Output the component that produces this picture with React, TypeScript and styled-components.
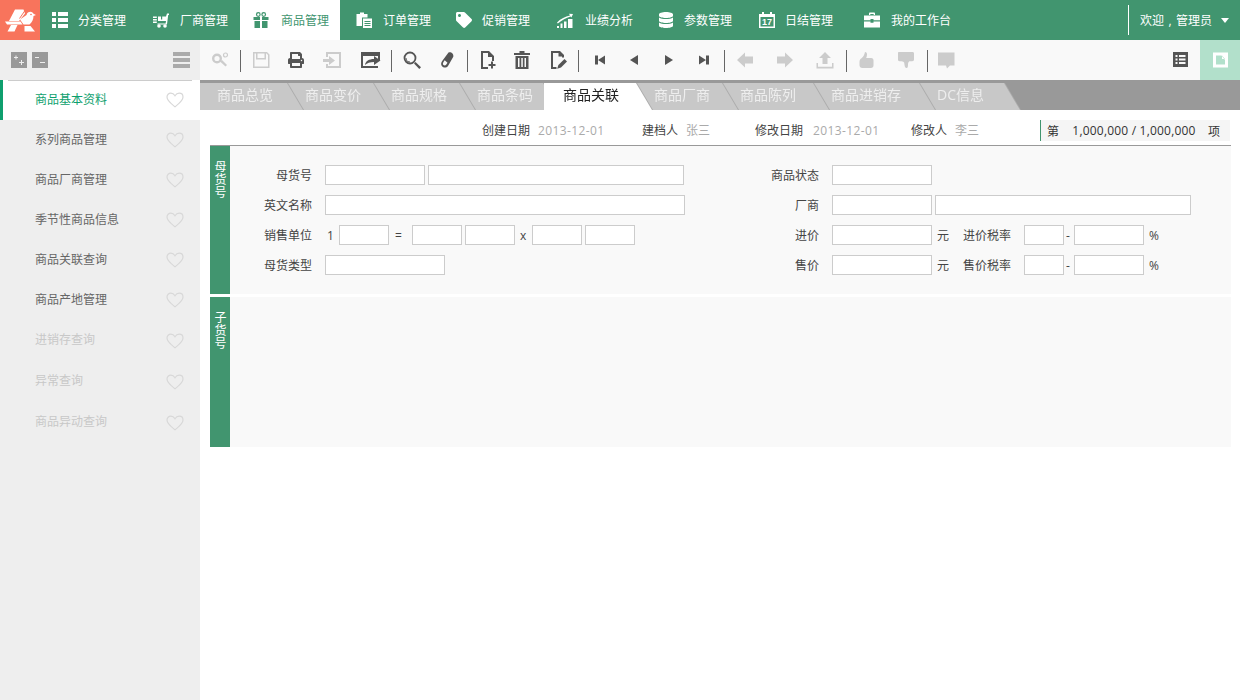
import React from "react";
import styled, { createGlobalStyle } from "styled-components";
import { FaTag, FaDatabase, FaPrint } from "react-icons/fa";

const GlobalStyle = createGlobalStyle`
  html, body {
    margin: 0;
    padding: 0;
    background: #fff;
  }
  * {
    box-sizing: border-box;
  }
  body {
    font-family: "Open Sans", "Noto Sans CJK SC", sans-serif;
    font-size: 12px;
    color: #555;
  }
`;

const Page = styled.div`
  width: 1240px;
  height: 700px;
  overflow: hidden;
  display: flex;
  flex-direction: column;
`;
const TopBar = styled.div`
  height: 40px;
  display: flex;
  background: #41956f;
  color: #fff;
  flex: none;
`;
const Logo = styled.div`
  width: 40px;
  height: 40px;
  background: #f8745c;
  display: flex;
`;
const NavItem = styled.div<{ $pad: number; $gap: number; $active?: boolean }>`
  width: 100px;
  height: 40px;
  display: flex;
  align-items: center;
  padding-left: ${(p) => p.$pad}px;
  gap: ${(p) => p.$gap}px;
  white-space: nowrap;
  background: ${(p) => (p.$active ? "#fff" : "transparent")};
  color: ${(p) => (p.$active ? "#41956f" : "#fff")};
  svg {
    width: 16px;
    height: 16px;
    flex: none;
  }
`;
const Welcome = styled.div`
  margin-left: auto;
  width: 112px;
  height: 30px;
  margin-top: 5px;
  border-left: 1px solid #fff;
  padding-left: 11px;
  display: flex;
  align-items: center;
  white-space: nowrap;
`;
const Comma = styled.span`
  width: 12px;
  text-align: center;
`;
const Caret = styled.span`
  margin-left: 9px;
  border-left: 4px solid transparent;
  border-right: 4px solid transparent;
  border-top: 5px solid #fff;
`;
const Body = styled.div`
  flex: 1;
  display: flex;
  min-height: 0;
`;
const Sidebar = styled.div`
  width: 200px;
  background: #eee;
  flex: none;
`;
const SideHead = styled.div`
  height: 40px;
  display: flex;
  align-items: center;
  padding: 0 10px 0 11px;
  gap: 5px;
`;
const TreeButton = styled.div`
  width: 16px;
  height: 16px;
  background: #999;
  color: #eee;
  display: flex;
  svg {
    width: 16px;
    height: 16px;
  }
`;
const Bars = styled.div`
  margin-left: auto;
  width: 17px;
  height: 16px;
  display: flex;
  flex-direction: column;
  justify-content: space-between;
  i {
    display: block;
    height: 4px;
    background: #aaa;
  }
`;
const SideRow = styled.div<{ $active?: boolean; $off?: boolean }>`
  position: relative;
  height: ${(p) => (p.$off ? 41 : 40)}px;
  display: flex;
  align-items: center;
  justify-content: space-between;
  padding: 0 16px ${(p) => (p.$off ? 4 : 2)}px 35px;
  background: ${(p) => (p.$active ? "#fff" : "transparent")};
  color: ${(p) => (p.$active ? "#0e9f6e" : p.$off ? "#c8c8c8" : "#666")};
  ${(p) =>
    p.$active
      ? `border-left: 3px solid #0e9f6e; padding-left: 32px;
         &::before { content: ""; position: absolute; top: 0; left: 5px; width: 184px; height: 1px; background: #ccc; }`
      : ""}
  svg {
    width: 18px;
    height: 16px;
    margin-top: ${(p) => (p.$off ? 4 : 2)}px;
  }
`;
const Main = styled.div`
  flex: 1;
  min-width: 0;
  display: flex;
  flex-direction: column;
`;
const Toolbar = styled.div`
  height: 40px;
  flex: none;
  display: flex;
  align-items: center;
  background: #f9f9f9;
`;
const ToolButton = styled.div<{ $w: number; $off?: boolean; $size?: number }>`
  width: ${(p) => p.$w}px;
  height: 40px;
  flex: none;
  display: flex;
  align-items: center;
  justify-content: center;
  color: ${(p) => (p.$off ? "#ccc" : "#555")};
  svg {
    width: ${(p) => p.$size || 20}px;
    height: ${(p) => p.$size || 20}px;
  }
`;
const ToolSep = styled.div<{ $ml?: number }>`
  width: 1px;
  height: 22px;
  margin-left: ${(p) => p.$ml || 0}px;
  margin-top: 2px;
  background: #666;
  flex: none;
`;
const ToolRight = styled.div`
  margin-left: auto;
  display: flex;
`;
const ToolActive = styled(ToolButton)`
  background: #b2e0cb;
  color: #fff;
`;
const TabBar = styled.div`
  height: 30px;
  flex: none;
  background: #999;
  padding-top: 3px;
  display: flex;
`;
const Tab = styled.div<{ $w: number; $z: number; $active?: boolean }>`
  position: relative;
  z-index: ${(p) => (p.$active ? 50 : p.$z)};
  width: ${(p) => p.$w + 15}px;
  margin-right: -15px;
  height: 27px;
  flex: none;
  filter: drop-shadow(1px 0 0 #aaa);
`;
const TabFace = styled.div<{ $active?: boolean; $pad: number }>`
  height: 27px;
  line-height: 24px;
  font-size: 14px;
  white-space: nowrap;
  padding-left: ${(p) => p.$pad}px;
  background: ${(p) => (p.$active ? "#fff" : "#c8c8c8")};
  color: ${(p) => (p.$active ? "#222" : "#eee")};
  clip-path: polygon(0 0, calc(100% - 16px) 0, 100% 100%, 0 100%);
`;
const Content = styled.div`
  padding: 0 9px 0 10px;
`;
const InfoRow = styled.div`
  height: 36px;
  border-bottom: 1px solid #999;
  padding: 10px 0 0 272px;
  display: flex;
  align-items: flex-start;
`;
const InfoItem = styled.div<{ $w: number; $gap?: number }>`
  width: ${(p) => p.$w}px;
  display: flex;
  gap: ${(p) => p.$gap || 8}px;
  line-height: 21px;
  color: #444;
  white-space: nowrap;
`;
const InfoValue = styled.span<{ $date?: boolean }>`
  color: #aaa;
  letter-spacing: ${(p) => (p.$date ? "0.4px" : "0")};
`;
const Pager = styled.div`
  width: 190px;
  height: 21px;
  background: #f5f5f5;
  border-left: 1px solid #41956f;
  padding: 0 10px 0 6px;
  display: flex;
  align-items: center;
  justify-content: space-between;
  color: #333;
`;
const PagerCount = styled.span`
  letter-spacing: 0.2px;
  margin-left: 1px;
`;
const Section = styled.div<{ $h: number }>`
  height: ${(p) => p.$h}px;
  display: flex;
  background: #f9f9f9;
  margin-bottom: 3px;
`;
const Strip = styled.div`
  width: 20px;
  flex: none;
  background: #41956f;
  color: #fff;
  font-family: "Noto Sans CJK SC", sans-serif;
  writing-mode: vertical-rl;
  line-height: 20px;
  letter-spacing: 1px;
  padding-top: 14px;
`;
const FormColumn = styled.div<{ $w?: number }>`
  width: ${(p) => (p.$w ? `${p.$w}px` : "auto")};
  padding-top: 19px;
  flex: none;
`;
const FormRow = styled.div`
  display: flex;
  height: 20px;
  line-height: 22px;
  margin-bottom: 10px;
  white-space: nowrap;
`;
const Label = styled.div<{ $w: number; $left?: boolean }>`
  width: ${(p) => p.$w}px;
  text-align: ${(p) => (p.$left ? "left" : "right")};
  margin-right: ${(p) => (p.$left ? 0 : 13)}px;
  color: #444;
  flex: none;
`;
const Input = styled.input<{ $w: number; $ml?: number }>`
  width: ${(p) => p.$w}px;
  height: 20px;
  margin: 0 0 0 ${(p) => p.$ml || 0}px;
  padding: 0;
  border: 1px solid #ccc;
  background: #fff;
  flex: none;
`;
const Unit = styled.div<{ $w: number; $pad?: number }>`
  width: ${(p) => p.$w}px;
  padding-left: ${(p) => p.$pad || 0}px;
  color: #444;
  flex: none;
`;

const icon = (children: React.ReactNode) => (
  <svg viewBox="0 0 20 20" fill="currentColor">
    {children}
  </svg>
);

const navIcons: Record<string, React.ReactNode> = {
  list: (
    <svg viewBox="0 0 16 16" fill="currentColor">
      <path d="M0 0h4v4H0zM6 0h10v4H6zM0 6h4v4H0zM6 6h10v4H6zM0 12h4v4H0zM6 12h10v4H6z" />
    </svg>
  ),
  cart: (
    <svg viewBox="0 0 16 16" fill="currentColor">
      <path d="M14 1.500h2V3h-.8L14 12.500H4.500V11.500H12.600L13 9H5V4.500h3v3h1.200v-3H13z" />
      <path d="M0 4.500h3.800V6H0zM0 7h3.800v1.500H0zM0 9.500h3.800V11H0z" />
      <circle cx="6" cy="14" r="1.800" />
      <circle cx="12" cy="14" r="1.800" />
    </svg>
  ),
  gift: (
    <svg viewBox="0 0 16 16" fill="currentColor">
      <circle cx="5.300" cy="2.500" r="1.800" fill="none" stroke="currentColor" strokeWidth="1.200" />
      <circle cx="10.700" cy="2.500" r="1.800" fill="none" stroke="currentColor" strokeWidth="1.200" />
      <path d="M.5 5h6.500v3H.5zM9 5h6.500v3H9zM1.500 9H7v7H1.500zM9 9h5.500v7H9z" />
    </svg>
  ),
  paste: (
    <svg viewBox="0 0 16 16" fill="currentColor">
      <path d="M.5 2H4V.5h4V2h3.500v3.500H6V14H.5z" />
      <path
        fillRule="evenodd"
        d="M7 6.500h9V16H7zM8.500 9v1h6V9zM8.500 11v1h6v-1zM8.500 13v1h6v-1z"
      />
    </svg>
  ),
  tag: <FaTag />,
  chart: (
    <svg viewBox="0 0 16 16" fill="currentColor">
      <path d="M0 14h2v2H0zM3.500 11.500h2V16h-2zM7 9.500h2.500V16H7zM11 7h4.500v9H11z" />
      <path d="M0 10.500C4 6.500 8 4.500 13 3.500L12 1.800 16 2l-1.600 3.600-.8-1.200C9 6 5 8 .8 11.500z" />
    </svg>
  ),
  db: <FaDatabase />,
  calendar: (
    <svg viewBox="0 0 16 16" fill="currentColor">
      <path d="M0 2h3V0h2v2h6V0h2v2h3v14H0zM1.500 5v9.500h13V5z" />
      <text x="8" y="13.400" fontSize="9" fontWeight="700" textAnchor="middle" fontFamily="Liberation Sans, sans-serif">
        17
      </text>
    </svg>
  ),
  case: (
    <svg viewBox="0 0 16 16" fill="currentColor">
      <path d="M5 3V1.500C5 .8 5.500 .5 6 .5h4c.5 0 1 .3 1 1V3h-1.300V2H6.300v1z" />
      <path d="M0 3.500h16v4.700H9.500V7h-3v1.200H0zM0 9.500h6.500v1.300h3V9.500H16V15.500H0z" />
    </svg>
  ),
};

const toolIcons: Record<string, React.ReactNode> = {
  keys: icon(
    <>
      <circle cx="7" cy="8.500" r="3.800" fill="none" stroke="currentColor" strokeWidth="2.400" />
      <path d="M10 11.500l5.500 5 1.500-1.500-5-5z" />
      <circle cx="15.500" cy="5" r="2" fill="none" stroke="currentColor" strokeWidth="1.200" />
    </>
  ),
  save: icon(
    <path
      fillRule="evenodd"
      d="M2 2h14l2.500 2.500V18H2zM3.500 3.500v13h13.500V5.100L15.500 3.500H15v6H5v-6zM6.500 3.500v4.500h7V3.500z"
    />
  ),
  print: <FaPrint />,
  import: icon(
    <>
      <path d="M4 2h15v16H4v-4h2v2h11V4H6v3H4z" />
      <path d="M1 9h6V6l6 4.500L7 15v-3H1z" />
    </>
  ),
  open: icon(
    <>
      <path fillRule="evenodd" d="M0 2h19v8h-2V6H2v10h15v2H0z" />
      <path d="M4 15c.5-4 4-6 9-6V6l6.500 4.500L13 15v-3c-4 0-7 1-9 3z" />
    </>
  ),
  search: icon(
    <>
      <circle cx="8" cy="8" r="5.500" fill="none" stroke="currentColor" strokeWidth="1.800" />
      <path d="M4.500 8A3.500 3.500 0 0 0 8 11.500v1A4.500 4.500 0 0 1 3.500 8z" />
      <path d="M12 13.500l1.500-1.500 5.500 5.300-1.700 1.700z" />
    </>
  ),
  eraser: icon(
    <path
      fillRule="evenodd"
      d="M11.500 2.500c2.500-1 5.500 1.500 4.800 4.300L11 16c-1.500 2-4.500 2-6 .3-1.300-1.500-1-3.300 0-5zM6.500 12c-.8 1.200-.8 2.300 0 3 .8.800 2 .6 2.800-.5l1.200-1.800-2.800-2.500z"
    />
  ),
  newDoc: icon(
    <>
      <path d="M4 1h8l5 5v5h-2V7h-4V3H6v14h5v2H4z" />
      <path d="M14 11.500h2v2.500h2.500v2H16v2.500h-2V16h-2.500v-2H14z" />
    </>
  ),
  trash: icon(
    <path
      fillRule="evenodd"
      d="M7.500 1h5v2H18v2H2V3h5.500zM3.500 6h13v13h-13zM6 8v9h1.500V8zM9.300 8v9h1.500V8zM12.500 8v9H14V8z"
    />
  ),
  editDoc: icon(
    <>
      <path d="M3 1h9l4 4v2.500h-2V6.500h-3.500V3H5v14h3.500v2H3z" />
      <path d="M16.500 9l2.500 2.500-6 6-3.800 1.200 1.200-3.700z" />
    </>
  ),
  first: icon(<path d="M5 5.500h3v9H5zM8 10l7-4.500v9z" />),
  prev: icon(<path d="M6 10l8-5v10z" />),
  next: icon(<path d="M14 10L6 5v10z" />),
  last: icon(<path d="M15 5.500h-3v9h3zM12 10L5 5.500v9z" />),
  back: icon(<path d="M2 10l8-7.500v4h8v7h-8v4z" />),
  forward: icon(<path d="M18 10l-8-7.500v4H2v7h8v4z" />),
  upload: icon(
    <>
      <path d="M10 2l6 6h-3.500v6h-5V8H4z" />
      <path d="M1.500 13H3v3.800h14V13h1.500v5.500h-17z" />
    </>
  ),
  up: icon(
    <path d="M9 2c1.500 0 2 1 2 2.500 0 1.300-.3 2.500-.8 3.500h5c1.500 0 2.300 1 2.300 2.300v5.200c0 1.500-1 2.500-2.500 2.500H6.500C4.500 18 3.500 17 3.500 15v-3.500c0-1.500 1-2.500 2-3.200C7.500 7 8.500 4.500 9 2z" />
  ),
  down: icon(
    <path d="M3 2h13.500c1 0 1.500.7 1.500 1.500v6c0 1-.7 1.700-1.700 1.700h-3c-.8.800-1.300 1.800-1.300 3 0 1.500 0 2.300-.5 3.300-.3.700-1.800.8-2.300-.2-.7-1.500-.7-3-1-4.500-.3-.8-1.200-1.400-2.700-1.600H3.500C2.500 11.200 2 10.500 2 9.500V3c0-.6.400-1 1-1z" />
  ),
  comment: icon(<path d="M2 2.500h16.500v13H14L11 18.500l-1-3H2z" />),
  grid: icon(
    <path
      fillRule="evenodd"
      d="M3 2h15v15H3zM5.500 5v2h2V5zM9 5v2h6.500V5zM5.500 8.500v2h2v-2zM9 8.500v2h6.500v-2zM5.500 12v2h2v-2zM9 12v2h6.500v-2z"
    />
  ),
  page: icon(
    <path
      fillRule="evenodd"
      d="M3 2.500h15v15H3zM6 5.500v9h9V10l-3.500-4.500zM12 5.500L15 9h-3z"
    />
  ),
};

const navs = [
  { id: "list", text: "分类管理", pad: 12, gap: 10 },
  { id: "cart", text: "厂商管理", pad: 13, gap: 11 },
  { id: "gift", text: "商品管理", pad: 13, gap: 12, active: true },
  { id: "paste", text: "订单管理", pad: 16, gap: 11 },
  { id: "tag", text: "促销管理", pad: 16, gap: 10 },
  { id: "chart", text: "业绩分析", pad: 17, gap: 12 },
  { id: "db", text: "参数管理", pad: 18, gap: 10 },
  { id: "calendar", text: "日结管理", pad: 19, gap: 10 },
  { id: "case", text: "我的工作台", pad: 24, gap: 11 },
];

const sideItems = [
  { text: "商品基本资料", active: true },
  { text: "系列商品管理" },
  { text: "商品厂商管理" },
  { text: "季节性商品信息" },
  { text: "商品关联查询" },
  { text: "商品产地管理" },
  { text: "进销存查询", off: true },
  { text: "异常查询", off: true },
  { text: "商品异动查询", off: true },
];

// sep 是分隔线，ml 为分隔线前的补偿
const tools: any[] = [
  { id: "keys", w: 40, off: true },
  { sep: true },
  { id: "save", w: 40, off: true },
  { id: "print", w: 30, size: 16 },
  { id: "import", w: 42, off: true },
  { id: "open", w: 36 },
  { sep: true, ml: 2 },
  { id: "search", w: 40 },
  { id: "eraser", w: 30 },
  { sep: true, ml: 5 },
  { id: "newDoc", w: 38 },
  { id: "trash", w: 32 },
  { id: "editDoc", w: 40 },
  { sep: true },
  { id: "first", w: 42 },
  { id: "prev", w: 26 },
  { id: "next", w: 44 },
  { id: "last", w: 26 },
  { sep: true, ml: 7 },
  { id: "back", w: 40, off: true },
  { id: "forward", w: 40, off: true },
  { id: "upload", w: 40, off: true },
  { sep: true, ml: 1 },
  { id: "up", w: 38, off: true },
  { id: "down", w: 42, off: true },
  { sep: true },
  { id: "comment", w: 36, off: true },
];

const tabs = [
  { text: "商品总览", w: 88, pad: 17 },
  { text: "商品变价", w: 86, pad: 17 },
  { text: "商品规格", w: 86, pad: 17 },
  { text: "商品条码", w: 84, pad: 17 },
  { text: "商品关联", w: 93, pad: 19, active: true },
  { text: "商品厂商", w: 86, pad: 17 },
  { text: "商品陈列", w: 91, pad: 17 },
  { text: "商品进销存", w: 106, pad: 17 },
  { text: "DC信息", w: 85, pad: 17 },
];

const Heart = () => (
  <svg viewBox="0 0 18 16" fill="none" stroke="#d8d8d8" strokeWidth="1.200">
    <path d="M9 14.800C5 11.500 1 8.800 1 5c0-2.200 1.700-3.800 3.800-3.800C6.500 1.200 8 2.200 9 3.800c1-1.600 2.500-2.600 4.200-2.600C15.300 1.200 17 2.800 17 5c0 3.800-4 6.500-8 9.800z" />
  </svg>
);

export default function App() {
  return (
    <Page>
      <GlobalStyle />
      <TopBar>
        <Logo>
          <svg viewBox="0 0 40 40" width="40" height="40" fill="#fff">
            <path d="M15 9.500h8.500l1.500 4-6 7.500H9z" />
            <path d="M5 21.500h15.500l2 3H7z" />
            <path d="M11 25h6.500l-3 6.500H7.500z" />
            <path d="M20 19.500l6.500-4.500c.5-2 2-3.200 4-3.200 1.500 0 2.500 1 3 2l2.500 1.200-2.500 1c0 3.500-1.500 6.500-4 8.500h-6z" />
            <path d="M24.500 26h6l4.500 5.500H24.500z" />
            <circle cx="31" cy="14.500" r=".8" fill="#f8745c" />
            <path d="M25 10.500l-5.500 8" stroke="#f8745c" strokeWidth="1" fill="none" />
          </svg>
        </Logo>
        {navs.map((n) => (
          <NavItem key={n.id} $pad={n.pad} $gap={n.gap} $active={n.active}>
            {navIcons[n.id]}
            {n.text}
          </NavItem>
        ))}
        <Welcome>
          欢迎
          <Comma>,</Comma>
          管理员
          <Caret />
        </Welcome>
      </TopBar>
      <Body>
        <Sidebar>
          <SideHead>
            <TreeButton>
              <svg viewBox="0 0 16 16" fill="none" stroke="currentColor">
                <path d="M3 5.500h4M5 3.500v4M8 10.500h5M10.500 8v5" />
              </svg>
            </TreeButton>
            <TreeButton>
              <svg viewBox="0 0 16 16" fill="none" stroke="currentColor">
                <path d="M3 5.500h4M8 10.500h5" />
              </svg>
            </TreeButton>
            <Bars>
              <i />
              <i />
              <i />
            </Bars>
          </SideHead>
          {sideItems.map((s) => (
            <SideRow key={s.text} $active={s.active} $off={s.off}>
              {s.text}
              <Heart />
            </SideRow>
          ))}
        </Sidebar>
        <Main>
          <Toolbar>
            {tools.map((t, index) =>
              t.sep ? (
                <ToolSep key={index} $ml={t.ml} />
              ) : (
                <ToolButton key={index} $w={t.w} $off={t.off} $size={t.size}>
                  {toolIcons[t.id]}
                </ToolButton>
              )
            )}
            <ToolRight>
              <ToolButton $w={40}>{toolIcons.grid}</ToolButton>
              <ToolActive $w={40}>{toolIcons.page}</ToolActive>
            </ToolRight>
          </Toolbar>
          <TabBar>
            {tabs.map((t, index) => (
              <Tab key={t.text} $w={t.w} $z={20 - index} $active={t.active}>
                <TabFace $active={t.active} $pad={t.pad}>
                  {t.text}
                </TabFace>
              </Tab>
            ))}
          </TabBar>
          <Content>
            <InfoRow>
              <InfoItem $w={160}>
                创建日期<InfoValue $date>2013-12-01</InfoValue>
              </InfoItem>
              <InfoItem $w={113}>
                建档人<InfoValue>张三</InfoValue>
              </InfoItem>
              <InfoItem $w={156} $gap={10}>
                修改日期<InfoValue $date>2013-12-01</InfoValue>
              </InfoItem>
              <InfoItem $w={129}>
                修改人<InfoValue>李三</InfoValue>
              </InfoItem>
              <Pager>
                <span>第</span>
                <PagerCount>1,000,000 / 1,000,000</PagerCount>
                <span>项</span>
              </Pager>
            </InfoRow>
            <Section $h={148}>
              <Strip>母货号</Strip>
              <FormColumn $w={515}>
                <FormRow>
                  <Label $w={82}>母货号</Label>
                  <Input $w={100} />
                  <Input $w={256} $ml={3} />
                </FormRow>
                <FormRow>
                  <Label $w={82}>英文名称</Label>
                  <Input $w={360} />
                </FormRow>
                <FormRow>
                  <Label $w={82}>销售单位</Label>
                  <Unit $w={14} $pad={2}>
                    1
                  </Unit>
                  <Input $w={50} />
                  <Unit $w={23} $pad={6}>
                    =
                  </Unit>
                  <Input $w={50} />
                  <Input $w={50} $ml={3} />
                  <Unit $w={17} $pad={5}>
                    x
                  </Unit>
                  <Input $w={50} />
                  <Input $w={50} $ml={3} />
                </FormRow>
                <FormRow>
                  <Label $w={82}>母货类型</Label>
                  <Input $w={120} />
                </FormRow>
              </FormColumn>
              <FormColumn>
                <FormRow>
                  <Label $w={74}>商品状态</Label>
                  <Input $w={100} />
                </FormRow>
                <FormRow>
                  <Label $w={74}>厂商</Label>
                  <Input $w={100} />
                  <Input $w={256} $ml={3} />
                </FormRow>
                {["进价", "售价"].map((name) => (
                  <FormRow key={name}>
                    <Label $w={74}>{name}</Label>
                    <Input $w={100} />
                    <Unit $w={31} $pad={5}>
                      元
                    </Unit>
                    <Label $w={61} $left>
                      {name}税率
                    </Label>
                    <Input $w={40} />
                    <Unit $w={10} $pad={2}>
                      -
                    </Unit>
                    <Input $w={70} />
                    <Unit $w={20} $pad={5}>
                      %
                    </Unit>
                  </FormRow>
                ))}
              </FormColumn>
            </Section>
            <Section $h={150}>
              <Strip>子货号</Strip>
            </Section>
          </Content>
        </Main>
      </Body>
    </Page>
  );
}
